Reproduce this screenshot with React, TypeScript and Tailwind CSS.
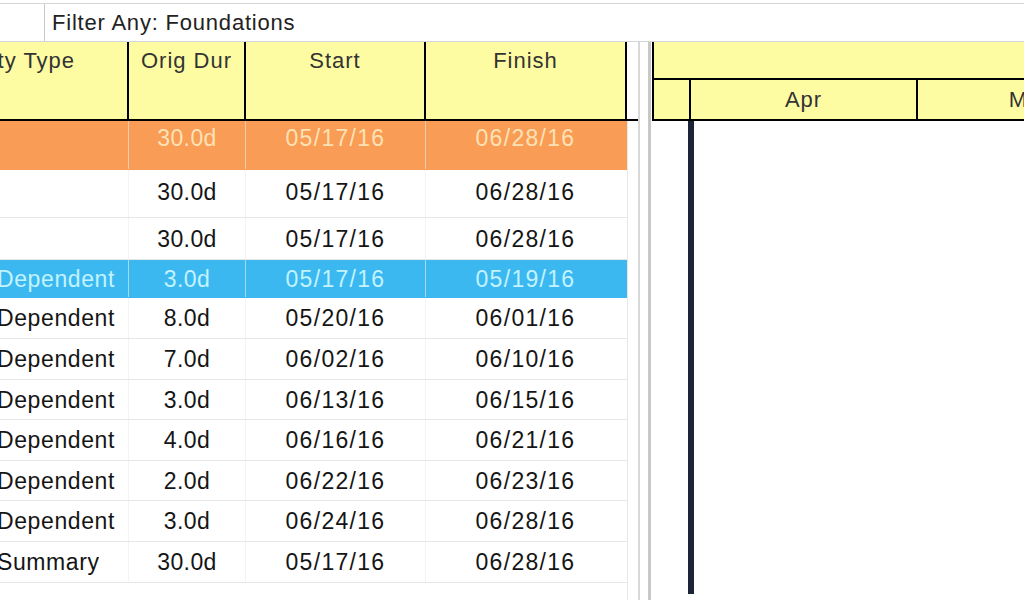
import React from "react";

type Row = {
  type: string;
  dur: string;
  start: string;
  finish: string;
  h: string;
  kind?: "orange" | "blue";
  align: string;
};

const rows: Row[] = [
  { type: "", dur: "30.0d", start: "05/17/16", finish: "06/28/16", h: "h-[49px]", kind: "orange", align: "items-start pt-[5px]" },
  { type: "", dur: "30.0d", start: "05/17/16", finish: "06/28/16", h: "h-[48px]", align: "items-start pt-[10px]" },
  { type: "", dur: "30.0d", start: "05/17/16", finish: "06/28/16", h: "h-[42px]", align: "items-center" },
  { type: "Dependent", dur: "3.0d", start: "05/17/16", finish: "05/19/16", h: "h-[38px]", kind: "blue", align: "items-center" },
  { type: "Dependent", dur: "8.0d", start: "05/20/16", finish: "06/01/16", h: "h-[41px]", align: "items-center" },
  { type: "Dependent", dur: "7.0d", start: "06/02/16", finish: "06/10/16", h: "h-[41px]", align: "items-center" },
  { type: "Dependent", dur: "3.0d", start: "06/13/16", finish: "06/15/16", h: "h-[40px]", align: "items-center" },
  { type: "Dependent", dur: "4.0d", start: "06/16/16", finish: "06/21/16", h: "h-[41px]", align: "items-center" },
  { type: "Dependent", dur: "2.0d", start: "06/22/16", finish: "06/23/16", h: "h-[40px]", align: "items-center" },
  { type: "Dependent", dur: "3.0d", start: "06/24/16", finish: "06/28/16", h: "h-[41px]", align: "items-center" },
  { type: "Summary", dur: "30.0d", start: "05/17/16", finish: "06/28/16", h: "h-[41px]", align: "items-center" },
];

function BodyRow({ r }: { r: Row }) {
  const bg =
    r.kind === "orange"
      ? "bg-[#f99c55] text-[#fde2b6]"
      : r.kind === "blue"
      ? "bg-[#3cb8f1] text-[#c2f3ff]"
      : "bg-white text-[#151515]";
  const sep = r.kind ? "border-transparent" : "border-[#e6e6e6]";
  return (
    <div className={`flex ${r.h} shrink-0`}>
      <div className={`flex w-[627px] ${bg} border-b ${sep}`}>
        <div className={`flex ${r.align} w-[129px] overflow-hidden border-r border-[#ececec]/60`}>
          <span className="ml-[-3px] whitespace-nowrap text-[23px] leading-[24px] tracking-[0.6px]">{r.type}</span>
        </div>
        <div className={`flex ${r.align} justify-center w-[117px] border-r border-[#ececec]/60`}>
          <span className="whitespace-nowrap text-[23px] leading-[24px] tracking-[0.4px]">{r.dur}</span>
        </div>
        <div className={`flex ${r.align} justify-center w-[180px] border-r border-[#ececec]/60`}>
          <span className="whitespace-nowrap text-[23px] leading-[24px] tracking-[1.3px]">{r.start}</span>
        </div>
        <div className={`flex ${r.align} justify-center w-[199px]`}>
          <span className="whitespace-nowrap text-[23px] leading-[24px] tracking-[1.3px]">{r.finish}</span>
        </div>
      </div>
      <div className="w-px bg-[#e8e8e8]" />
      <div className="flex-1 bg-white" />
    </div>
  );
}

export default function App() {
  return (
    <div className="w-[1024px] h-[600px] overflow-hidden bg-white flex flex-col font-['Liberation_Sans',Arial,sans-serif]">
      <div className="h-[3px] shrink-0 bg-white" />
      {/* Filter bar */}
      <div className="h-[39px] shrink-0 flex border-t border-b border-[#d2d6d8] bg-white">
        <div className="w-[45px] border-r border-[#c5c9cb]" />
        <div className="flex items-center pl-[7px] text-[22px] tracking-[0.8px] text-[#222]">
          Filter Any: Foundations
        </div>
      </div>

      {/* Main */}
      <div className="flex flex-1 min-h-0">
        {/* Left table */}
        <div className="w-[638px] shrink-0 flex flex-col">
          <div className="h-[79px] shrink-0 flex border-b-2 border-black">
            <div className="w-[129px] bg-[#fefca3] border-r-2 border-black overflow-hidden pt-[7px]">
              <span className="block ml-[-61px] whitespace-nowrap text-[22px] leading-[24px] tracking-[1px] text-[#333]">
                Activity Type
              </span>
            </div>
            <div className="w-[117px] bg-[#fefca3] border-r-2 border-black pt-[7px] text-center text-[22px] leading-[24px] tracking-[1px] text-[#333]">
              Orig Dur
            </div>
            <div className="w-[180px] bg-[#fefca3] border-r-2 border-black pt-[7px] text-center text-[22px] leading-[24px] tracking-[1px] text-[#333]">
              Start
            </div>
            <div className="w-[201px] bg-[#fefca3] border-r-2 border-black pt-[7px] text-center text-[22px] leading-[24px] tracking-[1px] text-[#333]">
              Finish
            </div>
            <div className="flex-1 bg-white" />
          </div>
          <div className="flex flex-col flex-1">
            {rows.map((r, i) => (
              <BodyRow key={i} r={r} />
            ))}
            <div className="flex flex-1">
              <div className="w-[627px]" />
              <div className="w-px bg-[#e8e8e8]" />
            </div>
          </div>
        </div>

        {/* Splitter */}
        <div className="w-[14px] shrink-0 flex">
          <div className="w-[2px] bg-[#d8d8d8]" />
          <div className="w-[8px] bg-white" />
          <div className="w-[3px] bg-[#c8c8c8]" />
          <div className="w-px bg-white" />
        </div>

        {/* Gantt */}
        <div className="flex-1 flex flex-col min-w-0">
          <div className="h-[79px] shrink-0 flex flex-col border-l-2 border-b-2 border-black">
            <div className="h-[38px] shrink-0 bg-[#fefca3] border-b-2 border-black" />
            <div className="flex flex-1 overflow-hidden">
              <div className="w-[37px] shrink-0 bg-[#fefca3] border-r-2 border-black" />
              <div className="w-[227px] shrink-0 bg-[#fefca3] border-r-2 border-black flex items-center justify-center text-[22px] tracking-[1px] text-[#333]">
                Apr
              </div>
              <div className="w-[226px] shrink-0 bg-[#fefca3] flex items-center justify-center text-[22px] tracking-[1px] text-[#333]">
                May
              </div>
            </div>
          </div>
          <div className="flex flex-1">
            <div className="w-[36px] shrink-0 bg-white" />
            <div className="w-[6px] shrink-0 bg-[#1e2438] mb-[6px]" />
            <div className="flex-1 bg-white" />
          </div>
        </div>
      </div>
    </div>
  );
}
